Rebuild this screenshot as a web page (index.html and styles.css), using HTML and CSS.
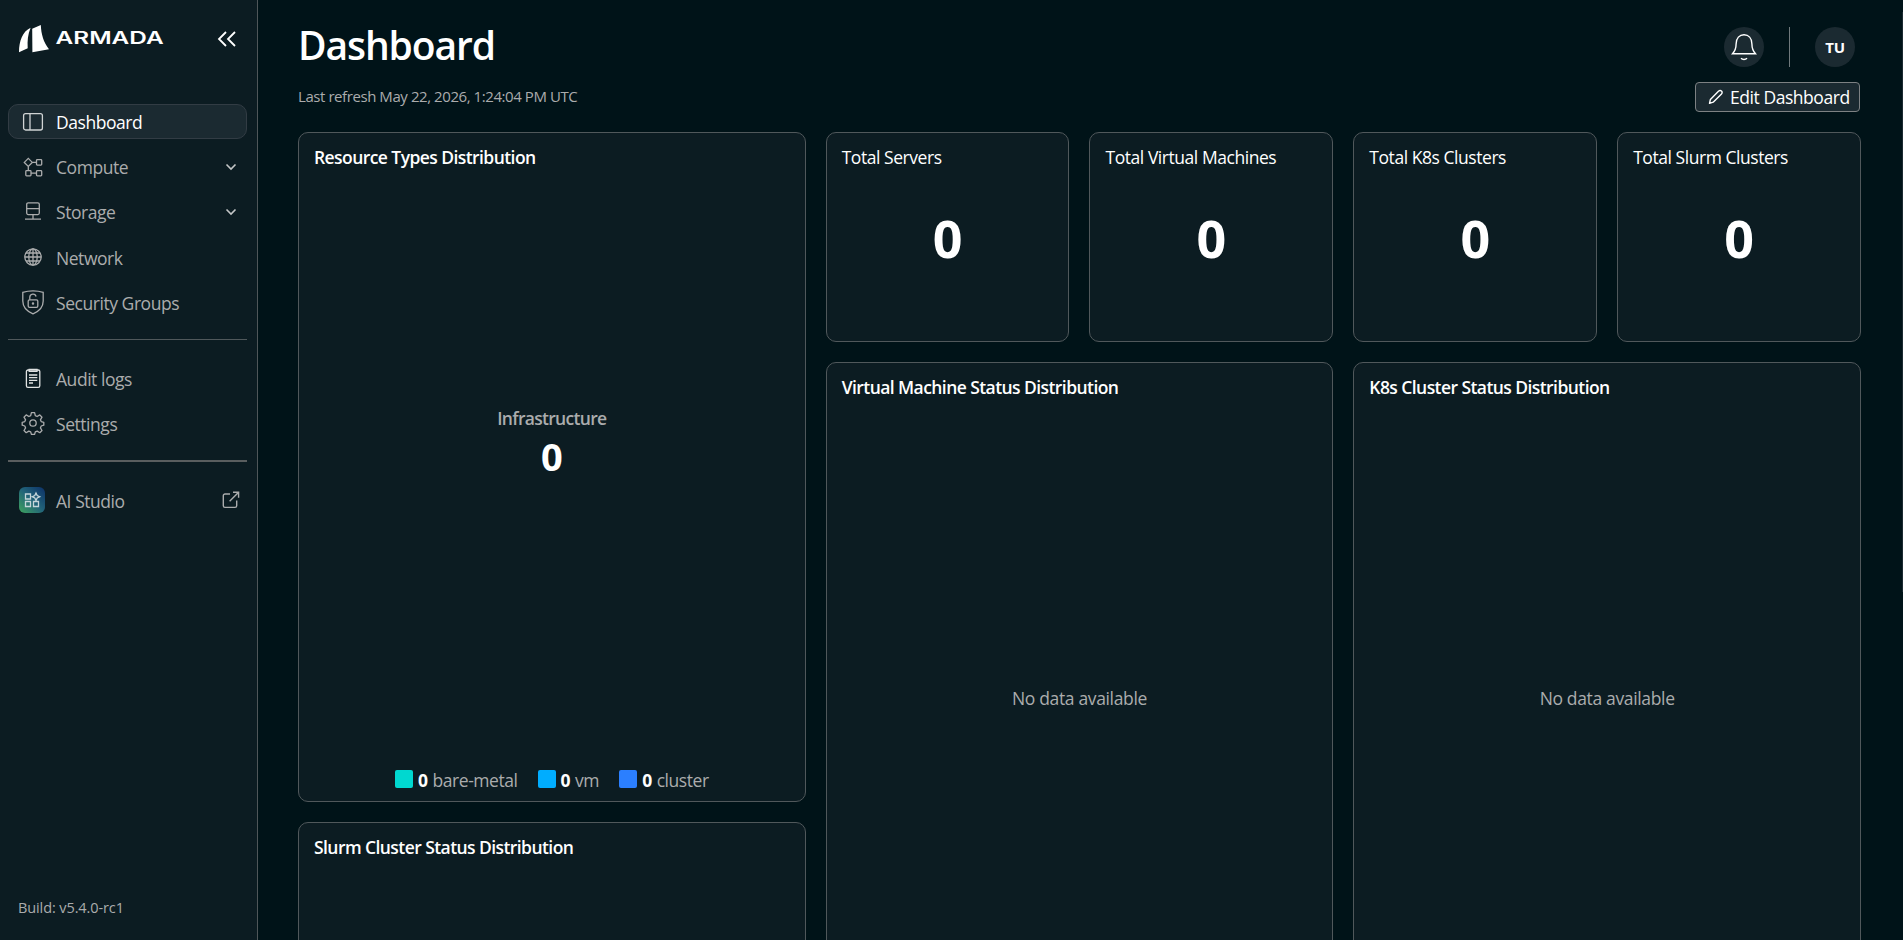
FILE: index.html
```html
<!DOCTYPE html>
<html lang="en">
<head>
<meta charset="utf-8">
<title>Dashboard</title>
<link rel="stylesheet" href="styles.css">
</head>
<body>
<div class="app">
  <aside class="sidebar">
    <div class="brand">
      <svg class="logo" width="150" height="30" viewBox="0 0 150 30">
        <path d="M1 28.3C1 17 4.5 7.5 12.6 3.8C9.8 10.5 9.3 17 9.7 24.2Z" fill="#fff"/>
        <path d="M14.2 4.8L22.8 1C23.2 10 25.5 18.5 31 25.2L14.4 28.2Z" fill="#fff"/>
        <text class="logo-text" x="37.6" y="20" textLength="108" lengthAdjust="spacingAndGlyphs">ARMADA</text>
      </svg>
      <svg class="collapse" width="20" height="18" viewBox="0 0 20 18"><path d="M9 2L2 9l7 7M18 2l-7 7 7 7"/></svg>
    </div>
    <nav class="nav">
      <a class="item active">
        <svg class="icon" viewBox="0 0 24 24"><rect x="2.6" y="3.6" width="18.8" height="16.4" rx="2"/><path d="M9 3.6v16.4"/></svg>
        <span>Dashboard</span>
      </a>
      <a class="item">
        <svg class="icon" viewBox="0 0 24 24"><path d="M7.3 3.4l4 4-4 4-4-4zM11.3 7.4h4.2M7.3 11.4v4.2M10 18.2h5.5"/><rect x="15.5" y="4.7" width="5.2" height="5.4" rx=".8"/><rect x="4.8" y="15.6" width="5.2" height="5.2" rx=".8"/><rect x="15.5" y="15.6" width="5.2" height="5.2" rx=".8"/></svg>
        <span>Compute</span>
        <svg class="chev" width="12" height="8" viewBox="0 0 12 8"><path d="M1.5 1.5L6 6l4.500-4.500"/></svg>
      </a>
      <a class="item">
        <svg class="icon" viewBox="0 0 24 24"><rect x="5.7" y="2.8" width="12.6" height="11.8" rx="1.5"/><path d="M5.700 8.700h12.600M12 14.600v4.400M4 19.200h16"/></svg>
        <span>Storage</span>
        <svg class="chev" width="12" height="8" viewBox="0 0 12 8"><path d="M1.5 1.5L6 6l4.500-4.500"/></svg>
      </a>
      <a class="item">
        <svg class="icon" viewBox="0 0 24 24"><circle cx="12" cy="12" r="8.200"/><ellipse cx="12" cy="12" rx="4.200" ry="8.200"/><path d="M12 3.800v16.400M3.800 12h16.400M5 8h14M5 16h14"/></svg>
        <span>Network</span>
      </a>
      <a class="item">
        <svg class="icon shield" viewBox="0 0 24 26"><path d="M12 1.800c3.500 0 7 .5 10.200 1.500v8.700c0 6.500-4.500 10.500-10.200 12.800C6.300 22.500 1.800 18.500 1.800 12V3.300C5 2.300 8.500 1.800 12 1.800z"/><rect x="7.200" y="10.800" width="9.600" height="7.600" rx="1.300"/><path d="M8.800 10.800V8.300a3.200 3.200 0 0 1 6.300-.8"/><circle cx="12" cy="14.600" r=".6"/></svg>
        <span>Security Groups</span>
      </a>
    </nav>
    <div class="rule"></div>
    <nav class="nav">
      <a class="item">
        <svg class="icon bright" viewBox="0 0 24 24"><rect x="5.400" y="4" width="13.400" height="17.300" rx="1.600"/><path d="M8.200 3.300h7.800v2H8.200zM8 9h8.300M8 11.700h8.300M8 14.300h8.300M8 17h4"/></svg>
        <span>Audit logs</span>
      </a>
      <a class="item">
        <svg class="icon" viewBox="0 0 24 24"><circle cx="12" cy="12" r="3.200"/><path stroke-linejoin="round" d="M10.400 1.700h3.200l.7 3 1.800.8 2.700-1.600 2.200 2.300-1.600 2.600.8 1.800 2.600.7v2.900l-2.600.8-.8 1.900 1.600 2.600-2.200 2.200-2.600-1.600-1.900.8-.7 2.500h-3.200l-.7-2.500-1.900-.8-2.600 1.600L3 19.500l1.600-2.600-.8-1.900-2.600-.8v-2.900l2.600-.7.8-1.800L3 6.200l2.200-2.300 2.700 1.600 1.800-.8z"/></svg>
        <span>Settings</span>
      </a>
    </nav>
    <div class="rule thick"></div>
    <nav class="nav">
      <a class="item">
        <svg class="studio" width="26" height="26" viewBox="0 0 26 26">
          <defs><linearGradient id="g" x1="0" y1="1" x2="1" y2="0"><stop offset="0" stop-color="#3fa45e"/><stop offset=".5" stop-color="#226479"/><stop offset="1" stop-color="#0c3068"/></linearGradient></defs>
          <rect width="26" height="26" rx="6" fill="url(#g)"/>
          <path d="M6.500 7h5v5h-5zM6.500 14.500h5v5h-5zM14.500 14.500h5v5h-5zM17 6l1.200 2.600 2.500 1.200-2.500 1.100L17 13.400l-1.200-2.500-2.500-1.100 2.500-1.200z" fill="none" stroke="#c5d6da" stroke-width="1.300"/>
        </svg>
        <span>AI Studio</span>
        <svg class="external" width="18" height="18" viewBox="0 0 18 18"><path d="M8 3H3a1.700 1.700 0 0 0-1.700 1.700v10A1.700 1.700 0 0 0 3 16.400h10a1.700 1.700 0 0 0 1.700-1.700V9.500M11 1.200h5.600v5.600M16.600 1.200L7.600 10.200"/></svg>
      </a>
    </nav>
    <div class="build">Build: v5.4.0-rc1</div>
  </aside>
  <main class="main">
    <header class="top">
      <h1>Dashboard</h1>
      <div class="user">
        <div class="round"><svg width="26" height="28" viewBox="0 0 26 28"><path d="M1.500 20.800c2-2.200 3.600-5.500 3.600-9.800C5.100 5 8.500 1.800 13 1.800S20.900 5 20.900 11c0 4.300 1.600 7.600 3.600 9.800zM10 25.200c1.600 1.700 4.400 1.700 6 0"/></svg></div>
        <div class="bar"></div>
        <div class="round initials">TU</div>
      </div>
    </header>
    <div class="sub">
      <span class="refresh">Last refresh May 22, 2026, 1:24:04 PM UTC</span>
      <button class="edit"><svg width="16" height="16" viewBox="0 0 16 16"><path stroke-linejoin="round" d="M1.500 14.300l.9-3.900L10.700 2.100a1.900 1.900 0 0 1 2.800 0 1.900 1.900 0 0 1 0 2.800L5.200 13.200z"/></svg><span>Edit Dashboard</span></button>
    </div>
    <section class="grid">
      <article class="card tall">
        <h2>Resource Types Distribution</h2>
        <div class="center"><div class="label">Infrastructure</div><div class="value">0</div></div>
        <div class="legend">
          <div class="key"><i class="teal"></i><b>0</b><span>bare-metal</span></div>
          <div class="key"><i class="sky"></i><b>0</b><span>vm</span></div>
          <div class="key"><i class="blue"></i><b>0</b><span>cluster</span></div>
        </div>
      </article>
      <article class="card stat"><h3>Total Servers</h3><div class="count">0</div></article>
      <article class="card stat"><h3>Total Virtual Machines</h3><div class="count">0</div></article>
      <article class="card stat"><h3>Total K8s Clusters</h3><div class="count">0</div></article>
      <article class="card stat"><h3>Total Slurm Clusters</h3><div class="count">0</div></article>
      <article class="card tall"><h2>Virtual Machine Status Distribution</h2><div class="empty">No data available</div></article>
      <article class="card tall"><h2>K8s Cluster Status Distribution</h2><div class="empty">No data available</div></article>
      <article class="card tall"><h2>Slurm Cluster Status Distribution</h2></article>
    </section>
    <div class="scroll-thumb"></div>
  </main>
</div>
</body>
</html>
```
FILE: styles.css
```css
* { box-sizing: border-box; }
body {
  margin: 0;
  background: #001318;
  color: #fff;
  font-family: "Open Sans", "Noto Sans", sans-serif;
  font-size: 17.5px;
  letter-spacing: -0.45px;
}
svg { display: block; fill: none; stroke: #fff; flex: none; }
.app { display: flex; height: 940px; overflow: hidden; }

.sidebar {
  width: 258px;
  flex: none;
  display: flex;
  flex-direction: column;
  padding: 24px 10px 22px 8px;
  background: #0c1c22;
  border-right: 1px solid #4f5659;
}
.brand { display: flex; justify-content: space-between; height: 80px; padding: 0 10px 0 10px; }
.logo { stroke: none; }
.logo-text { fill: #fff; font: 600 17px Inter, sans-serif; letter-spacing: 0; }
.collapse { margin-top: 6px; stroke-width: 1.8; }
.nav { display: flex; flex-direction: column; gap: 10.200px; }
.item {
  display: flex;
  align-items: center;
  height: 35px;
  padding: 0 8px 0 12px;
  border: 1px solid transparent;
  border-radius: 10px;
  color: #abacad;
}
.item span { flex: 1; margin-left: 11px; padding-top: 1px; }
.icon { width: 24px; height: 24px; stroke: #abacad; stroke-width: 1.300; }
.shield { height: 26px; }
.bright { stroke: #e0e2e2; }
.active { background: #1b2a31; border-color: #323c44; color: #fff; }
.active .icon { stroke: #d0d3d4; }
.chev { stroke: #c4c6c7; stroke-width: 1.600; margin-right: 1px; }
.external { stroke: #abacad; stroke-width: 1.400; margin-right: -2px; }
.studio { stroke: none; margin: 0 0 0 -2px; }
.rule { height: 1px; flex: none; background: #50585b; margin: 19px 0 21px; }
.thick { height: 2px; margin: 19px 0 21px; background: #5a5e5f; }
.build { margin: auto 0 0 10px; font-size: 14.500px; line-height: 20px; letter-spacing: -0.1px; color: #abacad; }

.main { flex: 1; position: relative; padding: 27px 42px 0 40px; }
.top { display: flex; justify-content: space-between; height: 55px; padding-right: 6px; }
h1 { margin: -10px 0 0; font-size: 39px; line-height: 56px; font-weight: 600; letter-spacing: -1.100px; }
.user { display: flex; gap: 25px; }
.round { width: 40px; height: 40px; border-radius: 50%; background: #1b2a31; display: grid; place-items: center; }
.round svg { stroke-width: 1.400; }
.bar { width: 1px; height: 40px; background: #70797c; }
.initials { font-size: 15px; font-weight: 700; letter-spacing: -0.2px; }
.sub { display: flex; justify-content: space-between; height: 50px; padding-right: 1px; }
.refresh { font-size: 15px; line-height: 28px; letter-spacing: -0.430px; color: #abacad; }
.edit {
  display: flex;
  align-items: center;
  gap: 6px;
  width: 165px;
  height: 30px;
  padding: 0 0 0 12px;
  background: #1b2a31;
  border: 1px solid #7d8183;
  border-radius: 4px;
  color: #fff;
  font: inherit;
  letter-spacing: inherit;
}
.edit svg { stroke-width: 1.400; }
.edit span { white-space: nowrap; }

.grid { display: grid; grid-template-columns: repeat(6, 1fr); grid-auto-rows: 210px; gap: 20px; }
.card {
  display: flex;
  flex-direction: column;
  padding: 11px 15px;
  background: #0c1c22;
  border: 1px solid #50585b;
  border-radius: 10px;
}
.tall { grid-column: span 2; grid-row: span 3; }
h2, h3 { margin: 0; font-size: 17.500px; line-height: 26px; white-space: nowrap; }
h2 { font-weight: 600; letter-spacing: -0.570px; }
h3 { font-weight: 400; }
.count { margin-top: 33px; text-align: center; font-size: 52px; line-height: 70px; font-weight: 700; letter-spacing: 0; }
.empty { flex: 1; display: grid; place-items: center; margin-bottom: 25px; color: #abacad; letter-spacing: -0.35px; }
.center { flex: 1; display: flex; flex-direction: column; align-items: center; justify-content: center; padding-bottom: 50px; }
.label { line-height: 24px; font-weight: 600; letter-spacing: -0.7px; color: #abacad; }
.value { font-size: 38px; line-height: 52px; font-weight: 700; letter-spacing: 0; }
.legend { display: flex; justify-content: center; gap: 20px; margin-bottom: -2px; line-height: 24px; }
.key { display: flex; color: #abacad; }
.key i { width: 18px; height: 18px; margin: 2px 5px 0 0; border-radius: 2px; }
.key b { color: #fff; font-weight: 700; margin-right: 5px; }
.teal { background: #00d8d0; }
.sky { background: #00adff; }
.blue { background: #2b7fff; }
.scroll-thumb { position: absolute; top: 12px; right: 0; width: 1px; height: 580px; background: #1b2a31; }
```
